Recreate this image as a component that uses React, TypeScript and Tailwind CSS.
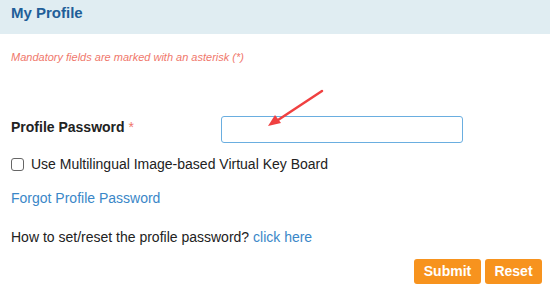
export default function App() {
  return (
    <div className="w-[550px] h-[292px] bg-white font-['Liberation_Sans',Arial,sans-serif] text-[14px] text-[#222]">
      {/* header */}
      <div className="h-[34px] bg-[#e0edf2] flex items-center px-[11px]">
        <h1 className="text-[15px] font-bold text-[#1f5f99] leading-none -mt-[9px]">My Profile</h1>
      </div>

      <div className="px-[11px]">
        <p className="mt-[17px] text-[11px] italic text-[#f0776b] leading-[13px]">
          Mandatory fields are marked with an asterisk (*)
        </p>

        {/* password row */}
        <div className="relative mt-[52px] flex items-center h-[27px]">
          <label className="w-[210px] font-bold leading-none -mt-[5px]">
            Profile Password <span className="text-[#f0776b] font-normal">*</span>
          </label>
          <input
            type="password"
            className="w-[242px] h-[27px] border border-[#6aaee0] rounded-[3px] outline-none px-2"
          />
          <svg className="absolute left-[250px] -top-[28px] pointer-events-none" width="70" height="45" viewBox="0 0 70 45">
            <line x1="61" y1="3" x2="14" y2="34" stroke="#f04040" strokeWidth="2.5" strokeLinecap="round" />
            <polygon points="7,38 14,27 20,35" fill="#f04040" />
          </svg>
        </div>

        {/* checkbox */}
        <label className="mt-[14px] flex items-center gap-[7px] h-[14px]">
          <span className="w-[13px] h-[13px] border border-[#666] rounded-[3px] bg-white inline-block"></span>
          <span className="leading-none">Use Multilingual Image-based Virtual Key Board</span>
        </label>

        <div className="mt-[20px] leading-none">
          <a className="text-[#3a87c8] cursor-pointer">Forgot Profile Password</a>
        </div>

        <div className="mt-[25px] leading-none">
          How to set/reset the profile password? <a className="text-[#3a87c8] cursor-pointer">click here</a>
        </div>
      </div>

      <div className="mt-[15px] flex justify-end gap-[4px] pr-[8px]">
        <button className="w-[67px] h-[25px] bg-[#f7931e] text-white font-bold rounded-[3px] text-[14px]">Submit</button>
        <button className="w-[57px] h-[25px] bg-[#f7931e] text-white font-bold rounded-[3px] text-[14px]">Reset</button>
      </div>
    </div>
  );
}
